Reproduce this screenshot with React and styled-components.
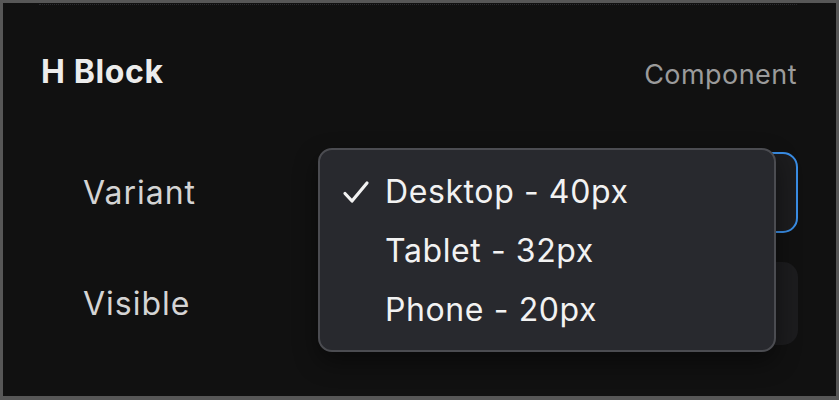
import * as React from 'react';
import styled, { createGlobalStyle } from 'styled-components';

const GlobalStyle = createGlobalStyle`
  html, body {
    margin: 0;
    padding: 0;
    background: #111111;
  }
  body {
    font-family: Inter, "Noto Sans", sans-serif;
    -webkit-font-smoothing: antialiased;
  }
`;

const Frame = styled.div`
  position: relative;
  box-sizing: border-box;
  width: 839px;
  height: 400px;
  border: 3px solid #575757;
  border-bottom-width: 4px;
  background: #111111;
  overflow: hidden;
`;

const Header = styled.div`
  display: flex;
  align-items: center;
  justify-content: space-between;
  box-sizing: border-box;
  height: 136px;
  margin: 1px 39px 0 36px;
  padding-left: 2px;
  border-top: 1px dotted #2c2c30;
`;

const Title = styled.div`
  font-size: 32px;
  font-weight: 700;
  letter-spacing: 0.6px;
  color: #ececec;
  margin-top: -3px;
`;

const Kind = styled.div`
  font-size: 27px;
  font-weight: 400;
  letter-spacing: 0.45px;
  color: #9b9b9b;
  margin-top: 3px;
`;

const Rows = styled.div`
  display: flex;
  flex-direction: column;
  gap: 29px;
  padding: 12px 38px 0 80px;
`;

const Row = styled.div`
  display: grid;
  grid-template-columns: 247px 1fr;
  align-items: center;
`;

const Label = styled.div`
  font-size: 32px;
  letter-spacing: 1px;
  color: #d4d4d4;
`;

const Control = styled.div`
  box-sizing: border-box;
  height: ${({ tall }) => (tall ? 83 : 81)}px;
  border-radius: 15px;
  background: #1c1c1e;
  border: ${({ focused }) => (focused ? '2px solid #3a8ee6' : 'none')};
`;

const Menu = styled.div`
  position: absolute;
  left: 315px;
  top: 145px;
  box-sizing: border-box;
  width: 458px;
  height: 204px;
  padding-top: 12px;
  border-radius: 14px;
  background: #28292e;
  border: 2px solid #4b4c51;
  box-shadow: 0 10px 24px rgba(0, 0, 0, 0.45);
`;

const Item = styled.div`
  display: flex;
  align-items: center;
  height: 59px;
  padding-left: 22px;
  font-size: 32px;
  letter-spacing: 0.6px;
  color: #f2f2f2;
`;

const Check = styled.span`
  display: inline-flex;
  width: 43px;
  align-items: center;
`;

const options = [
  { label: 'Desktop - 40px', selected: true },
  { label: 'Tablet - 32px' },
  { label: 'Phone - 20px' },
];

function CheckMark() {
  return (
    <svg width="28" height="24" viewBox="0 0 28 24" fill="none">
      <path
        d="M3 13.5 L10 21 L25 3"
        stroke="#f2f2f2"
        strokeWidth="3.2"
        strokeLinecap="round"
        strokeLinejoin="round"
      />
    </svg>
  );
}

export default function App() {
  return (
    <>
      <GlobalStyle />
      <Frame>
        <Header>
          <Title>H Block</Title>
          <Kind>Component</Kind>
        </Header>
        <Rows>
          <Row>
            <Label>Variant</Label>
            <Control focused />
          </Row>
          <Row>
            <Label>Visible</Label>
            <Control tall />
          </Row>
        </Rows>
        <Menu>
          {options.map((o) => (
            <Item key={o.label}>
              <Check>{o.selected ? <CheckMark /> : null}</Check>
              {o.label}
            </Item>
          ))}
        </Menu>
      </Frame>
    </>
  );
}
